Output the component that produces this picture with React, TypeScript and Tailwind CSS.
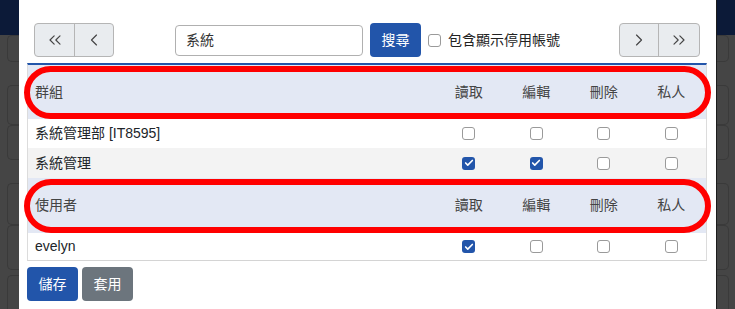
import { ChevronsLeft, ChevronLeft, ChevronRight, ChevronsRight, Check } from 'lucide-react';

const font = { fontFamily: '"Liberation Sans", "Noto Sans CJK TC", sans-serif' };

const groups = [
  { name: '系統管理部 [IT8595]', perms: [false, false, false, false] },
  { name: '系統管理', perms: [true, true, false, false] },
];

const users = [{ name: 'evelyn', perms: [true, false, false, false] }];

const cols = ['讀取', '編輯', '刪除', '私人'];

function Box({ checked }: { checked: boolean }) {
  return checked ? (
    <span className="w-[13px] h-[13px] rounded-[3px] bg-[#2255aa] flex items-center justify-center">
      <Check size={10} strokeWidth={4} className="text-white" />
    </span>
  ) : (
    <span className="w-[13px] h-[13px] rounded-[3px] border border-[#9a9a9a] bg-white" />
  );
}

function HeaderRow({ title, className }: { title: string; className: string }) {
  return (
    <div className={`relative flex items-center bg-[#e3e8f4] pl-[7px] pr-[1px] text-[#444] ${className}`}>
      <span className="flex-1">{title}</span>
      {cols.map((c) => (
        <span key={c} className="w-[67.5px] text-center">{c}</span>
      ))}
      {/* red highlight */}
      <div className="absolute -left-[4px] -right-[5px] top-[1px] bottom-0 border-[6px] border-[#ff0000] rounded-[28px] pointer-events-none" />
    </div>
  );
}

function PermRow({ name, perms, bg, h }: { name: string; perms: boolean[]; bg: string; h: string }) {
  return (
    <div className={`flex items-center pl-[7px] pr-[1px] text-[#212529] ${bg} ${h}`}>
      <span className="flex-1">{name}</span>
      {perms.map((p, i) => (
        <span key={i} className="w-[67.5px] flex justify-center">
          <Box checked={p} />
        </span>
      ))}
    </div>
  );
}

function SideStrip({ right }: { right?: boolean }) {
  const blocks = ['h-[27px]', 'h-[40px]', 'h-[35px]', 'h-[42px]', 'h-[45px]', 'h-[40px]'];
  const gaps = ['mt-0', 'mt-[23px]', 'mt-0', 'mt-[23px]', 'mt-0', 'mt-[5px]'];
  return (
    <div className="w-[19px] h-full bg-[#454545] flex flex-col overflow-hidden">
      <div className="h-[35px] bg-[#0c1a38] shrink-0" />
      {blocks.map((b, i) => (
        <div
          key={i}
          className={`${b} ${gaps[i]} shrink-0 border border-[#3a3a3a] ${
            right ? 'w-[12px] rounded-r-[5px] border-l-0' : 'ml-[7px] w-[14px] rounded-l-[5px] border-r-0'
          }`}
        />
      ))}
    </div>
  );
}

export default function App() {
  return (
    <div className="w-[735px] h-[309px] flex overflow-hidden bg-[#454545] text-[14px]" style={font}>
      <SideStrip />
      <div className="w-[697px] h-full bg-white flex flex-col">
        {/* toolbar */}
        <div className="flex items-center pt-[23px] pl-[15px] pr-[16px] h-[57px]">
          <div className="flex h-[34px] rounded-[4px] border border-[#b5b5b5] bg-[#e9ecef] text-[#444]">
            <span className="w-[40px] flex items-center justify-center border-r border-[#b5b5b5]">
              <ChevronsLeft size={20} strokeWidth={1.4} />
            </span>
            <span className="w-[38px] flex items-center justify-center">
              <ChevronLeft size={20} strokeWidth={1.4} />
            </span>
          </div>
          <div className="ml-[61px] w-[188px] h-[31px] border border-[#b0b0b0] rounded-[4px] flex items-center px-[10px] text-[#333]">
            系統
          </div>
          <button className="ml-[7px] w-[51px] h-[34px] rounded-[4px] bg-[#2255aa] text-white">搜尋</button>
          <span className="ml-[7px] w-[13px] h-[13px] rounded-[3px] border border-[#9a9a9a]" />
          <span className="ml-[7px] text-[#222]">包含顯示停用帳號</span>
          <div className="ml-auto flex h-[34px] rounded-[4px] border border-[#b5b5b5] bg-[#e9ecef] text-[#444]">
            <span className="w-[39px] flex items-center justify-center border-r border-[#b5b5b5]">
              <ChevronRight size={20} strokeWidth={1.4} />
            </span>
            <span className="w-[40px] flex items-center justify-center">
              <ChevronsRight size={20} strokeWidth={1.4} />
            </span>
          </div>
        </div>

        {/* permission table */}
        <div className="mt-[6px] ml-[8px] w-[680px] border-t-2 border-t-[#2255aa] border-x border-x-[#dcdcdc] border-b border-b-[#d4d4d4]">
          <HeaderRow title="群組" className="h-[54px]" />
          {groups.map((g, i) => (
            <PermRow key={g.name} name={g.name} perms={g.perms} bg={i % 2 ? 'bg-[#f3f3f3]' : 'bg-white'} h={i % 2 ? 'h-[30px]' : 'h-[29px]'} />
          ))}
          <HeaderRow title="使用者" className="h-[55px]" />
          {users.map((u) => (
            <PermRow key={u.name} name={u.name} perms={u.perms} bg="bg-white" h="h-[27px]" />
          ))}
        </div>

        <div className="flex gap-[4px] ml-[8px] mt-[6px]">
          <button className="w-[51px] h-[34px] rounded-[4px] bg-[#2255aa] text-white">儲存</button>
          <button className="w-[51px] h-[34px] rounded-[4px] bg-[#6c757d] text-white">套用</button>
        </div>
      </div>
      <div className="w-px h-full bg-[#1c1c1c]" />
      <div className="w-[18px] h-full">
        <SideStrip right />
      </div>
    </div>
  );
}
